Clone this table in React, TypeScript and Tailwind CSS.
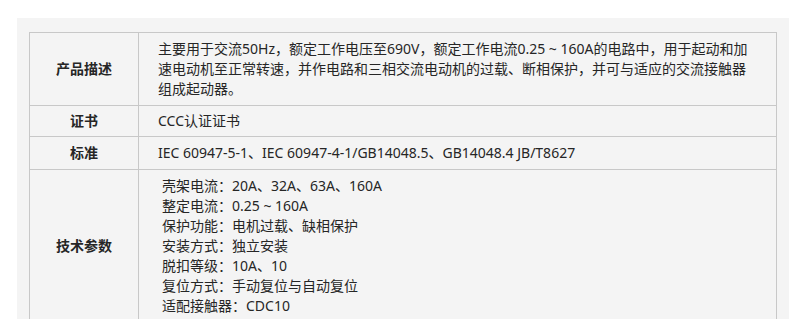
const params = [
  '壳架电流：20A、32A、63A、160A',
  '整定电流：0.25 ~ 160A',
  '保护功能：电机过载、缺相保护',
  '安装方式：独立安装',
  '脱扣等级：10A、10',
  '复位方式：手动复位与自动复位',
  '适配接触器：CDC10',
]

export default function App() {
  return (
    <div
      className="w-[800px] h-[319px] bg-white overflow-hidden pt-[18px] pl-[17px]"
      style={{ fontFamily: '"Noto Sans", "Noto Sans CJK SC", sans-serif' }}
    >
      <div className="w-[772px] h-[320px] bg-[#f4f4f4] pt-[14px] pl-[12px] pr-[12px]">
        <table className="w-[748px] border-collapse text-[14px] leading-[20px] text-[#262626]">
          <tbody>
            <tr>
              <td className="w-[109px] border border-[#c8c8c8] text-center font-bold">产品描述</td>
              <td className="border border-[#c8c8c8] pl-[19px] py-[6px] whitespace-nowrap">
                主要用于交流50Hz，额定工作电压至690V，额定工作电流0.25 ~ 160A的电路中，用于起动和加
                <br />
                速电动机至正常转速，并作电路和三相交流电动机的过载、断相保护，并可与适应的交流接触器
                <br />
                组成起动器。
              </td>
            </tr>
            <tr>
              <td className="border border-[#c8c8c8] text-center font-bold">证书</td>
              <td className="border border-[#c8c8c8] pl-[19px] py-[5px]">CCC认证证书</td>
            </tr>
            <tr>
              <td className="border border-[#c8c8c8] text-center font-bold">标准</td>
              <td className="border border-[#c8c8c8] pl-[19px] py-[6px]">
                IEC 60947-5-1、IEC 60947-4-1/GB14048.5、GB14048.4 JB/T8627
              </td>
            </tr>
            <tr>
              <td className="border border-[#c8c8c8] text-center font-bold">技术参数</td>
              <td className="border border-[#c8c8c8] pl-[23px] py-[6px]">
                {params.map(p => (
                  <div key={p}>{p}</div>
                ))}
              </td>
            </tr>
          </tbody>
        </table>
      </div>
    </div>
  )
}
